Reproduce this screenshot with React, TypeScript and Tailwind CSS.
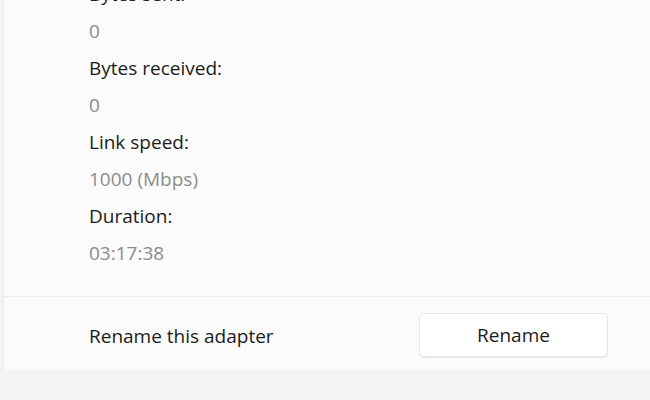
export default function App() {
  const rows = [
    { label: "Bytes sent:", value: "0" },
    { label: "Bytes received:", value: "0" },
    { label: "Link speed:", value: "1000 (Mbps)" },
    { label: "Duration:", value: "03:17:38" },
  ];

  return (
    <div
      className="w-[650px] h-[400px] overflow-hidden bg-[#f3f3f3] pl-[3px]"
      style={{ fontFamily: '"Open Sans", "Noto Sans", sans-serif' }}
    >
      <div className="-mt-[24px] bg-[#fbfbfb] border-l border-[#e8e8e8] w-[660px]">
        <div className="pl-[85px] pb-[24px]">
          {rows.map((row) => (
            <div key={row.label}>
              <div className="h-[37px] flex items-center text-[19px] text-[#1b1b1b]">
                {row.label}
              </div>
              <div className="h-[37px] flex items-center text-[19px] text-[#8b8b8b]">
                {row.value}
              </div>
            </div>
          ))}
        </div>
        <div className="h-px bg-[#ededed]" />
        <div className="h-[73px] flex items-center pl-[85px] pt-[6px]">
          <div className="w-[330px] text-[19px] text-[#1b1b1b]">
            Rename this adapter
          </div>
          <button className="w-[189px] h-[44px] -mt-[3px] rounded-[5px] bg-white border border-[#e6e6e6] shadow-[0_1px_1px_rgba(0,0,0,0.08)] text-[19px] text-[#1b1b1b]">
            Rename
          </button>
        </div>
      </div>
    </div>
  );
}
